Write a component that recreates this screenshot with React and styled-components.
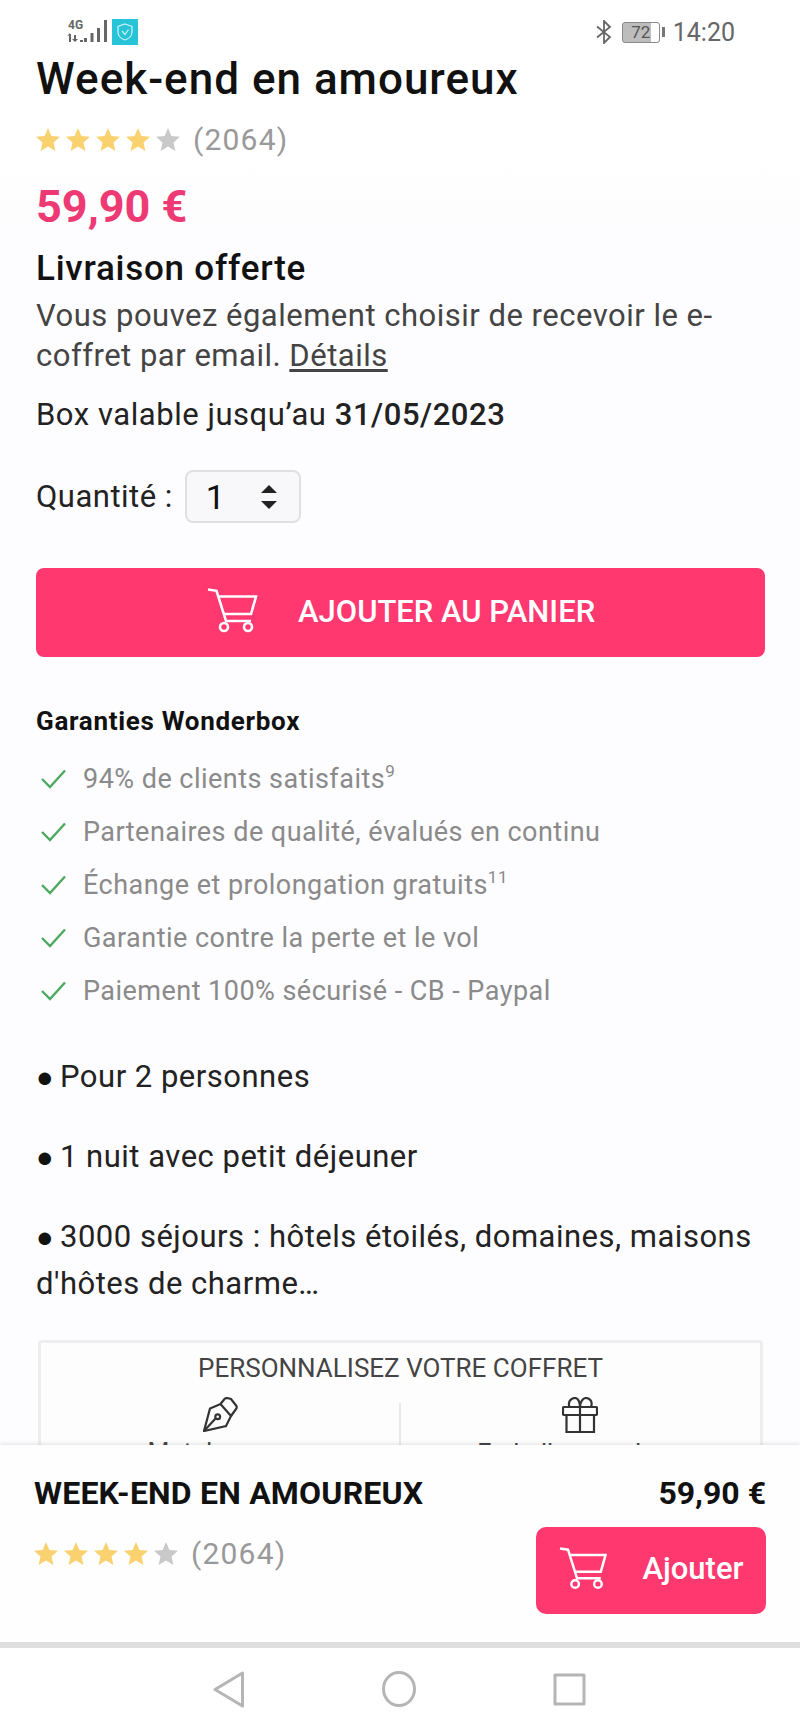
import React from 'react'
import styled, { createGlobalStyle } from 'styled-components'

const Global = createGlobalStyle`
  html, body { margin: 0; padding: 0; background: #fff; }
  * { box-sizing: border-box; }
  body { font-family: Roboto, "Liberation Sans", sans-serif; color: #1a1a1a; }
`

const Screen = styled.div`
  width: 800px;
  height: 1733px;
  display: flex;
  flex-direction: column;
  overflow: hidden;
  background: #fff;
`

const StatusBar = styled.div`
  height: 54px;
  flex: none;
  display: flex;
  align-items: center;
  padding: 10px 65px 0 66px;
  background: #fff;
`
const StatusLeft = styled.div`
  display: flex;
  align-items: center;
  gap: 4px;
`
const StatusRight = styled.div`
  margin-left: auto;
  display: flex;
  align-items: center;
`
const ShieldBox = styled.div`
  width: 26px;
  height: 26px;
  background: #27c4d8;
  display: flex;
  align-items: center;
  justify-content: center;
`
const Battery = styled.div`
  width: 38px;
  height: 21px;
  margin-left: 10px;
  border: 1.5px solid #8a8a8a;
  border-radius: 3px;
  background: linear-gradient(to right, #bdbdbd 78%, #fff 78%);
  font-size: 17px;
  line-height: 18px;
  text-align: center;
  color: #555;
`
const BatteryNub = styled.div`
  width: 3px;
  height: 10px;
  margin-left: 2px;
  background: #777;
`
const Clock = styled.div`
  margin-left: 8px;
  font-size: 25px;
  color: #666;
`

const Content = styled.main`
  flex: 1;
  min-height: 0;
  overflow: hidden;
  padding: 0 35px 0 36px;
  background: linear-gradient(#fff 100px, #fdfcfe 200px);
`
const Title = styled.h1`
  margin: 0;
  font-size: 44px;
  line-height: 50px;
  font-weight: 500;
  color: #111;
  letter-spacing: 1px;
`
const RatingRow = styled.div`
  display: flex;
  align-items: center;
  gap: 13px;
  height: 40px;
  margin-top: ${p => p.$top || 0}px;
`
const StarRow = styled.div`
  display: flex;
  gap: 6px;
`
const Count = styled.span`
  font-size: 30px;
  color: #999;
  letter-spacing: 1.2px;
`
const Price = styled.div`
  margin-top: 23px;
  font-size: 45px;
  line-height: 50px;
  font-weight: 700;
  color: #ee3a74;
`
const Delivery = styled.h2`
  margin: 17px 0 0;
  font-size: 35px;
  line-height: 40px;
  font-weight: 500;
  color: #111;
  letter-spacing: 0.75px;
`
const Para = styled.p`
  margin: 7px 0 0;
  font-size: 31px;
  line-height: 40px;
  color: #444;
  letter-spacing: 0.5px;
  a { color: inherit; text-decoration: underline; text-underline-offset: 3px; }
`
const Validity = styled.p`
  margin: 19px 0 0;
  font-size: 31px;
  line-height: 40px;
  letter-spacing: 0.55px;
  color: #222;
  b { font-weight: 500; }
`
const QtyRow = styled.div`
  display: flex;
  align-items: center;
  gap: 12px;
  margin-top: 35px;
  font-size: 31px;
  letter-spacing: 0.5px;
  color: #222;
`
const Select = styled.div`
  width: 116px;
  height: 53px;
  border: 2px solid #e0e0e2;
  border-radius: 8px;
  background: #f8f8fa;
  display: flex;
  align-items: center;
  padding: 0 22px 0 19px;
  justify-content: space-between;
  font-size: 34px;
  color: #111;
`
const PinkButton = styled.button`
  border: 0;
  background: #ff3870;
  color: #fff;
  font-family: inherit;
  font-weight: 500;
  display: flex;
  align-items: center;
  border-radius: ${p => (p.$wide ? 8 : 10)}px;
  width: ${p => (p.$wide ? '729px' : '230px')};
  height: ${p => (p.$wide ? '89px' : '87px')};
  margin-top: ${p => (p.$wide ? 45 : 0)}px;
  padding: ${p => (p.$wide ? '0 0 3px 171px' : '0 0 4px 23px')};
  gap: ${p => (p.$wide ? 39 : 34)}px;
  font-size: 31px;
`
const GuaranteeTitle = styled.h3`
  margin: 49px 0 0;
  font-size: 26px;
  line-height: 30px;
  font-weight: 700;
  color: #111;
  letter-spacing: 0.7px;
`
const GuaranteeList = styled.ul`
  list-style: none;
  margin: 16px 0 0;
  padding: 0;
`
const GuaranteeItem = styled.li`
  height: 53px;
  display: flex;
  align-items: center;
  gap: 17px;
  padding-left: 5px;
  font-size: 27px;
  color: #8a8a8a;
  letter-spacing: 0.47px;
  sup { font-size: 17px; line-height: 0; position: relative; top: -1px; vertical-align: super; }
`
const Bullets = styled.div`
  margin-top: 36px;
`
const Bullet = styled.p`
  margin: 0 0 33px;
  font-size: 31px;
  line-height: 47px;
  color: #222;
  letter-spacing: 0.5px;
`
const Dot = styled.span`
  display: inline-block;
  width: 24px;
  font-size: 29px;
  line-height: 0;
  letter-spacing: 0;
  color: #111;
`
const CustomBox = styled.section`
  margin: 33px 0 0 2px;
  width: 725px;
  height: 200px;
  border: 3px solid #eeeeee;
  border-radius: 4px;
  background: #fefdfe;
`
const CustomTitle = styled.div`
  text-align: center;
  font-size: 26px;
  line-height: 42px;
  color: #444;
  height: 47px;
  padding-top: 4px;
`
const CustomCols = styled.div`
  display: grid;
  grid-template-columns: 358px 1fr;
`
const CustomCol = styled.div`
  display: flex;
  flex-direction: column;
  align-items: center;
  font-size: 25px;
  line-height: 30px;
  color: #444;
  background: ${p => (p.$divided ? 'linear-gradient(#e9e9e9, #e9e9e9) left 13px / 2px 100% no-repeat' : 'none')};
  svg { margin-top: 7px; }
  span { margin-top: 6px; }
`

const StickyBar = styled.div`
  flex: none;
  height: 203px;
  background: #fefefe;
  box-shadow: 0 -2px 3px rgba(0, 0, 0, 0.08);
  border-bottom: 6px solid #dedede;
  padding: 0 34px;
  position: relative;
  display: grid;
  grid-template-columns: 1fr auto;
  grid-template-rows: 82px auto;
`
const StickyTitle = styled.div`
  align-self: center;
  padding-top: 14px;
  font-size: 32px;
  font-weight: 700;
  color: #111;
  letter-spacing: 0.2px;
`
const StickyPrice = styled.div`
  align-self: center;
  justify-self: end;
  padding-top: 14px;
  font-size: 32px;
  font-weight: 700;
  color: #111;
`
const NavBar = styled.nav`
  flex: none;
  height: 85px;
  display: flex;
  align-items: center;
  background: #fff;
  padding: 0 0 3px 213px;
  gap: 137px;
`

const Star = ({ color }) => (
  <svg width="24" height="23" viewBox="0 0 24 23">
    <polygon points="12,0 15.4,8 24,8.7 17.5,14.4 19.4,23 12,18.4 4.6,23 6.5,14.4 0,8.7 8.6,8" fill={color} />
  </svg>
)

const Rating = ({ top }) => (
  <RatingRow $top={top}>
    <StarRow>
      <Star color="#f9d26f" />
      <Star color="#f9d26f" />
      <Star color="#f9d26f" />
      <Star color="#f9d26f" />
      <Star color="#c9c9c9" />
    </StarRow>
    <Count>(2064)</Count>
  </RatingRow>
)

const Cart = ({ scale = 1 }) => (
  <svg width={52 * scale} height={46 * scale} viewBox="0 0 52 46" fill="none" stroke="#fff" strokeWidth="2.6">
    <path d="M1 1.5 L9.5 2.8 L19 33 H44" />
    <path d="M11 8.5 H49 L44 26 H16" />
    <circle cx="17" cy="39" r="4" />
    <circle cx="41" cy="39" r="4" />
  </svg>
)

const Check = () => (
  <svg width="25" height="20" viewBox="0 0 25 20" fill="none" stroke="#4da860" strokeWidth="2.4">
    <path d="M1 10 L9 18 L24 1.5" />
  </svg>
)

const items = [
  ['94% de clients satisfaits', '9'],
  ['Partenaires de qualité, évalués en continu'],
  ['Échange et prolongation gratuits', '11'],
  ['Garantie contre la perte et le vol'],
  ['Paiement 100% sécurisé - CB - Paypal'],
]

export default function App() {
  return (
    <Screen>
      <Global />
      <StatusBar>
        <StatusLeft>
          <svg width="42" height="26" viewBox="0 0 42 26" fill="#666">
            <text x="2" y="9.5" fontFamily="Roboto" fontSize="12" fontWeight="700">4G</text>
            <path d="M3 15 H5 V23 H3 Z M1 17 L4 14 L4 16 Z M8 16 H10 V20 H12 L9 23 L6 20 H8 Z" />
            <rect x="14" y="21" width="3" height="2" />
            <rect x="18" y="19" width="3" height="4" />
            <rect x="24.5" y="14" width="3" height="9" />
            <rect x="31" y="9" width="3" height="14" />
            <rect x="38" y="1" width="3" height="22" />
          </svg>
          <ShieldBox>
            <svg width="16" height="18" viewBox="0 0 16 18" fill="none" stroke="#c8f2f6" strokeWidth="1.3">
              <path d="M8 1 L15 3.5 V9 C15 13 11.5 16 8 17 C4.5 16 1 13 1 9 V3.5 Z" />
              <path d="M5 8 L8 11.5 L11.5 6.5" />
            </svg>
          </ShieldBox>
        </StatusLeft>
        <StatusRight>
          <svg width="16" height="24" viewBox="0 0 16 24" fill="none" stroke="#666" strokeWidth="1.8">
            <path d="M1 6.5 L14 17 L8 23 V1 L14 7 L1 17.5" />
          </svg>
          <Battery>72</Battery>
          <BatteryNub />
          <Clock>14:20</Clock>
        </StatusRight>
      </StatusBar>
      <Content>
        <Title>Week-end en amoureux</Title>
        <Rating top={15} />
        <Price>59,90 €</Price>
        <Delivery>Livraison offerte</Delivery>
        <Para>
          Vous pouvez également choisir de recevoir le e-coffret par email. <a href="#details">Détails</a>
        </Para>
        <Validity>
          Box valable jusqu’au <b>31/05/2023</b>
        </Validity>
        <QtyRow>
          Quantité :
          <Select>
            1
            <svg width="16" height="24" viewBox="0 0 16 24" fill="#222">
              <polygon points="8,0 16,8 0,8" />
              <polygon points="0,16 16,16 8,24" />
            </svg>
          </Select>
        </QtyRow>
        <PinkButton $wide>
          <Cart />
          AJOUTER AU PANIER
        </PinkButton>
        <GuaranteeTitle>Garanties Wonderbox</GuaranteeTitle>
        <GuaranteeList>
          {items.map(([text, note]) => (
            <GuaranteeItem key={text}>
              <Check />
              <span>
                {text}
                {note && <sup>{note}</sup>}
              </span>
            </GuaranteeItem>
          ))}
        </GuaranteeList>
        <Bullets>
          <Bullet><Dot>●</Dot>Pour 2 personnes</Bullet>
          <Bullet><Dot>●</Dot>1 nuit avec petit déjeuner</Bullet>
          <Bullet><Dot>●</Dot>3000 séjours : hôtels étoilés, domaines, maisons d'hôtes de charme…</Bullet>
        </Bullets>
        <CustomBox>
          <CustomTitle>PERSONNALISEZ VOTRE COFFRET</CustomTitle>
          <CustomCols>
            <CustomCol>
              <svg width="35" height="35" viewBox="0 0 35 35" fill="none" stroke="#333" strokeWidth="2.2">
                <path d="M1 34 L7 11.5 L17.5 7 L28 19 L23 29 Z" />
                <path d="M17.5 7 L21.5 2 Q22.5 1 24 1 L28 2 L33.5 9 Q34 11 33 12 L28 19" />
                <path d="M1 34 L13 21" />
                <circle cx="14.7" cy="19.7" r="2.4" />
              </svg>
              <span>Mot de vœux</span>
            </CustomCol>
            <CustomCol $divided>
              <svg width="36" height="36" viewBox="0 0 36 36" fill="none" stroke="#333" strokeWidth="2.2">
                <rect x="1" y="10" width="34" height="8" rx="1" />
                <path d="M4.5 18 V35 H32 V18" />
                <path d="M18 10 V35" />
                <path d="M7.5 10 C5 3 11 1 13 1 C16 1 18 5 18 10 C18 5 21 1 24 1 C26 1 31.5 3 29 10" />
              </svg>
              <span>Emballage cadeau</span>
            </CustomCol>
          </CustomCols>
        </CustomBox>
      </Content>
      <StickyBar>
        <StickyTitle>WEEK-END EN AMOUREUX</StickyTitle>
        <StickyPrice>59,90 €</StickyPrice>
        <Rating top={6} />
        <PinkButton>
          <Cart scale={0.95} />
          Ajouter
        </PinkButton>
      </StickyBar>
      <NavBar>
        <svg width="32" height="37" viewBox="0 0 32 37" fill="none" stroke="#b5b5b5" strokeWidth="3" strokeLinejoin="round">
          <path d="M29.5 2 V35 L2 18.5 Z" />
        </svg>
        <svg width="34" height="36" viewBox="0 0 34 36" fill="none" stroke="#b5b5b5" strokeWidth="3">
          <ellipse cx="17" cy="18" rx="15.5" ry="16.5" />
        </svg>
        <svg width="33" height="33" viewBox="0 0 33 33" fill="none" stroke="#b5b5b5" strokeWidth="3" strokeLinejoin="round">
          <rect x="2" y="2" width="29" height="29" />
        </svg>
      </NavBar>
    </Screen>
  )
}
